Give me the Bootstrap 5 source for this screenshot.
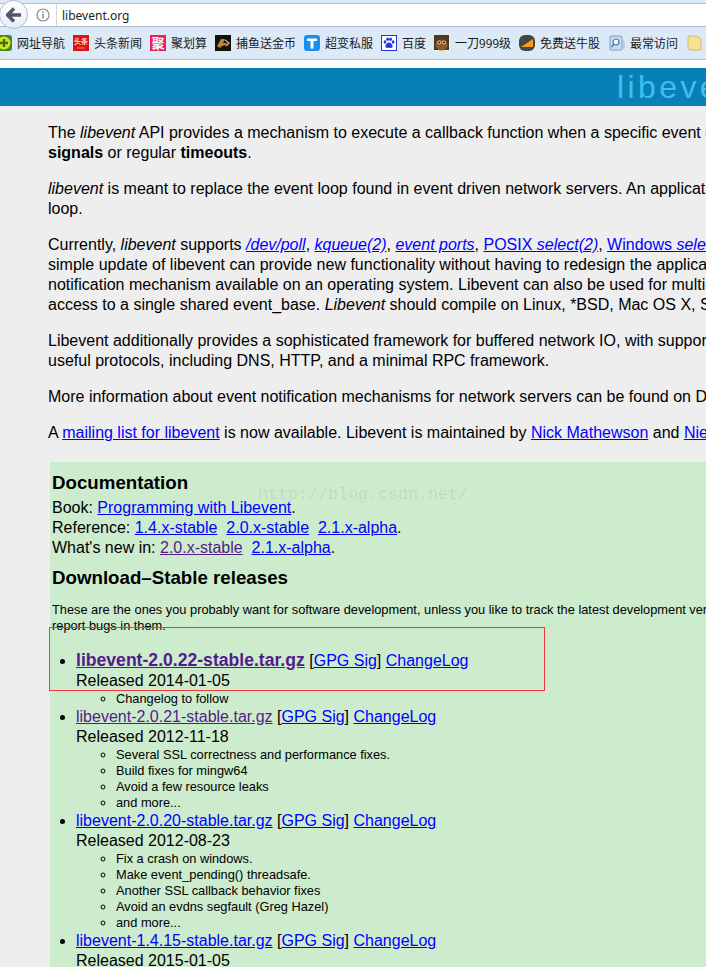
<!DOCTYPE html>
<html lang="en">
<head>
<meta charset="utf-8">
<title>libevent</title>
<link href="https://cdn.jsdelivr.net/npm/bootstrap@5.3.0/dist/css/bootstrap.min.css" rel="stylesheet">
<style>
html,body{height:967px;overflow:hidden}
body{background:#eee;font-family:"Liberation Sans",Arial,sans-serif;font-size:16px;line-height:20px;color:#000;position:relative}
a{color:#00f}
a.seen{color:#551a8b}
.topstrip{height:27px;background:#dce9f7;padding-top:3px}
.addr{height:24px;background:#fff;border-top:1px solid #b3c0d2;border-bottom:1px solid #a9b8cc;padding-left:36px;gap:6px}
.backbtn{position:absolute;left:-1px;top:0;width:29px;height:29px;border-radius:50%;background:linear-gradient(#fff,#e6edf6);border:1px solid #aebcce}
.urltext{font-family:"Noto Sans",sans-serif;font-size:12px;line-height:24px;color:#222;border-left:1px solid #d4d4d4;padding-left:5px;height:22px}
.bmbar{height:33px;background:#dce9f7;border-bottom:1px solid #b1c1d6;font-family:"Noto Sans CJK SC",sans-serif;font-size:12px;line-height:16px;color:#1a1a1a;white-space:nowrap}
.bmitem{gap:5px;flex:none;margin-right:8px}
.bmitem svg{flex:none;display:block}
.bmfirst{margin-left:-4px}
.bmmid{margin-right:9px}
.whitegap{height:8px;background:#fff}
.banner{height:38px;background:#0780b6;color:#3fbdf0;font-size:32px;line-height:38px;letter-spacing:3.4px;padding-left:617px;white-space:nowrap;overflow:hidden}
.maintext{padding:17px 0 0 48px;white-space:nowrap}
.maintext p{margin:0 0 16px}
.greenbox{margin:19px 0 0 50px;background:#cdecce;padding:10px 0 0 2px;white-space:nowrap;height:520px}
.greenbox h2{font-size:18.72px;line-height:22px;font-weight:700;margin:0 0 4px}
.greenbox h2.dl{margin:9px 0 13px}
.smalltxt{font-size:12.8px;line-height:16px;margin:0 0 16px}
.rellist{margin:0;padding-left:24px}
.rellist ul{list-style:circle;margin:0;padding-left:40px;font-size:12.8px;line-height:16px}
.hl{font-weight:700;font-size:17.6px}
.redbox{position:absolute;left:49px;top:627px;width:496px;height:64px;border:1px solid #ef3a3a}
.wmark{position:absolute;left:258px;top:484px;font-family:"Liberation Mono",monospace;font-size:16.67px;line-height:22px;color:rgba(120,120,120,.16);white-space:nowrap}
.icontxt{font-family:"Noto Sans CJK SC",sans-serif;font-weight:700}
</style>
</head>
<body>
<div class="topstrip">
  <div class="addr d-flex align-items-center">
    <svg width="14" height="14" viewBox="0 0 14 14" class="flex-none"><circle cx="7" cy="7" r="6" fill="#fff" stroke="#8d8d8d" stroke-width="1.2"/><rect x="6.2" y="6" width="1.6" height="4.5" fill="#8d8d8d"/><rect x="6.2" y="3.4" width="1.6" height="1.6" fill="#8d8d8d"/></svg>
    <div class="urltext">libevent.org</div>
  </div>
</div>
<div class="backbtn d-flex align-items-center justify-content-center">
  <svg width="16" height="16" viewBox="0 0 16 16"><path d="M8 1.5 1.5 8 8 14.500M2 8h13" fill="none" stroke="#50596a" stroke-width="3.400"/></svg>
</div>

<div class="bmbar d-flex align-items-center">
  <div class="bmitem bmfirst d-flex align-items-center"><svg width="16" height="16" viewBox="0 0 16 16"><rect width="16" height="16" rx="3" fill="#2f8f2f"/><circle cx="8" cy="8" r="6.500" fill="#f1d618"/><path d="M8 4v8M4 8h8" stroke="#1d7a1d" stroke-width="2.400"/></svg><span>网址导航</span></div>
  <div class="bmitem d-flex align-items-center"><svg width="16" height="16" viewBox="0 0 16 16"><rect width="16" height="16" fill="#dc1414"/><text class="icontxt" x="8" y="9" font-size="7" text-anchor="middle" fill="#f8dada">头条</text><path d="M4 13h8" stroke="#ee8585"/></svg><span>头条新闻</span></div>
  <div class="bmitem d-flex align-items-center"><svg width="16" height="16" viewBox="0 0 16 16"><rect width="16" height="16" fill="#ea1c5c"/><text class="icontxt" x="8" y="13" font-size="13" text-anchor="middle" fill="#fff">聚</text></svg><span>聚划算</span></div>
  <div class="bmitem d-flex align-items-center"><svg width="16" height="16" viewBox="0 0 16 16"><rect width="16" height="16" fill="#14100c"/><path d="M2 11 6 4h4L8 8h4l-1 2-4 1-2 2z" fill="#b8863c"/><path d="M10 5l4 3-3 3" fill="none" stroke="#d8a65c" stroke-width="1.500"/></svg><span>捕鱼送金币</span></div>
  <div class="bmitem d-flex align-items-center"><svg width="16" height="16" viewBox="0 0 16 16"><rect width="16" height="16" rx="3" fill="#1a90ee"/><path d="M3 3.500h10v2.500H9.500v7.500h-3V6H3z" fill="#fff"/></svg><span>超变私服</span></div>
  <div class="bmitem d-flex align-items-center"><svg width="16" height="16" viewBox="0 0 16 16"><rect x=".5" y=".5" width="15" height="15" fill="#fff" stroke="#2932e1"/><g fill="#2932e1"><ellipse cx="4" cy="7" rx="1.400" ry="1.800"/><ellipse cx="6.600" cy="4.200" rx="1.400" ry="1.800"/><ellipse cx="9.600" cy="4.200" rx="1.400" ry="1.800"/><ellipse cx="12.100" cy="7" rx="1.400" ry="1.800"/><path d="M8 7.500c-2 0-4 2.500-3.600 4.300.4 1.600 2.400 1 3.600 1s3.200.6 3.600-1C12 10 10 7.500 8 7.500z"/></g></svg><span>百度</span></div>
  <div class="bmitem d-flex align-items-center"><svg width="16" height="16" viewBox="0 0 16 16"><rect width="16" height="16" fill="#f4f0e4"/><rect width="15" height="15" fill="#4a3a20"/><ellipse cx="7.500" cy="10" rx="6" ry="5.500" fill="#8c5a2c"/><circle cx="5" cy="7.500" r="2" fill="#e8c88a"/><circle cx="10" cy="7.500" r="2" fill="#e8c88a"/><circle cx="5" cy="7.500" r="1" fill="#221408"/><circle cx="10" cy="7.500" r="1" fill="#221408"/></svg><span>一刀999级</span></div>
  <div class="bmitem bmmid d-flex align-items-center"><svg width="16" height="16" viewBox="0 0 16 16"><rect width="16" height="16" rx="6" fill="#454545"/><path d="M2 12 14 4v8z" fill="#f59d16"/></svg><span>免费送牛股</span></div>
  <div class="bmitem bmmid d-flex align-items-center"><svg width="16" height="16" viewBox="0 0 16 16"><rect x="1" y="1" width="12" height="14" rx="1" fill="#c9dbef" stroke="#7d9cbd"/><circle cx="7" cy="7" r="3" fill="#eef5fc" stroke="#4f7ba8" stroke-width="1.200"/><path d="M5 9 2.500 12" stroke="#4f7ba8" stroke-width="1.500"/><path d="M13 6h2v7h-2" fill="none" stroke="#a6b9cc"/></svg><span>最常访问</span></div>
  <div class="bmitem d-flex align-items-center"><svg width="16" height="16" viewBox="0 0 16 16"><path d="M1 3a2 2 0 0 1 2-2h7l4 3v11H3a2 2 0 0 1-2-2z" fill="#f4e29a" stroke="#d2bd6c"/></svg></div>
</div>
<div class="whitegap"></div>
<div class="banner">libevent</div>

<div class="maintext">
<p>The <em>libevent</em> API provides a mechanism to execute a callback function when a specific event occurs on a file descriptor or after a timeout<br><strong>signals</strong> or regular <strong>timeouts</strong>.</p>
<p><em>libevent</em> is meant to replace the event loop found in event driven network servers. An application just needs to call event_dispatch()<br>loop.</p>
<p>Currently, <em>libevent</em> supports <a href="#"><em>/dev/poll</em></a>, <a href="#"><em>kqueue(2)</em></a>, <a href="#"><em>event ports</em></a>, <a href="#">POSIX <em>select(2)</em></a>, <a href="#">Windows <em>select()</em></a>, <a href="#"><em>poll(2)</em></a>, and <a href="#"><em>epoll(4)</em></a><br>simple update of libevent can provide new functionality without having to redesign the applications<br>notification mechanism available on an operating system. Libevent can also be used for multi-threaded applications<br>access to a single shared event_base. <em>Libevent</em> should compile on Linux, *BSD, Mac OS X, Solaris, Windows</p>
<p>Libevent additionally provides a sophisticated framework for buffered network IO, with support for sockets<br>useful protocols, including DNS, HTTP, and a minimal RPC framework.</p>
<p>More information about event notification mechanisms for network servers can be found on Dan Kegel's page</p>
<p>A <a href="#">mailing list for libevent</a> is now available. Libevent is maintained by <a href="#">Nick Mathewson</a> and <a href="#">Niels Provos</a></p>
</div>

<div class="greenbox">
<h2>Documentation</h2>
<div>Book: <a href="#">Programming with Libevent</a>.<br>
Reference: <a href="#">1.4.x-stable</a>&nbsp; <a href="#">2.0.x-stable</a>&nbsp; <a href="#">2.1.x-alpha</a>.<br>
What's new in: <a class="seen" href="#">2.0.x-stable</a>&nbsp; <a href="#">2.1.x-alpha</a>.</div>
<h2 class="dl">Download–Stable releases</h2>
<p class="smalltxt">These are the ones you probably want for software development, unless you like to track the latest development version and<br>report bugs in them.</p>
<ul class="rellist">
<li><a class="seen hl" href="#">libevent-2.0.22-stable.tar.gz</a> [<a href="#">GPG Sig</a>] <a href="#">ChangeLog</a><br>Released 2014-01-05
  <ul><li>Changelog to follow</li></ul></li>
<li><a class="seen" href="#">libevent-2.0.21-stable.tar.gz</a> [<a href="#">GPG Sig</a>] <a href="#">ChangeLog</a><br>Released 2012-11-18
  <ul><li>Several SSL correctness and performance fixes.</li><li>Build fixes for mingw64</li><li>Avoid a few resource leaks</li><li>and more...</li></ul></li>
<li><a href="#">libevent-2.0.20-stable.tar.gz</a> [<a href="#">GPG Sig</a>] <a href="#">ChangeLog</a><br>Released 2012-08-23
  <ul><li>Fix a crash on windows.</li><li>Make event_pending() threadsafe.</li><li>Another SSL callback behavior fixes</li><li>Avoid an evdns segfault (Greg Hazel)</li><li>and more...</li></ul></li>
<li><a href="#">libevent-1.4.15-stable.tar.gz</a> [<a href="#">GPG Sig</a>] <a href="#">ChangeLog</a><br>Released 2015-01-05</li>
</ul>
</div>
<div class="wmark">http://blog.csdn.net/</div>
<div class="redbox"></div>
<script src="https://cdn.jsdelivr.net/npm/bootstrap@5.3.0/dist/js/bootstrap.bundle.min.js"></script>
</body>
</html>
